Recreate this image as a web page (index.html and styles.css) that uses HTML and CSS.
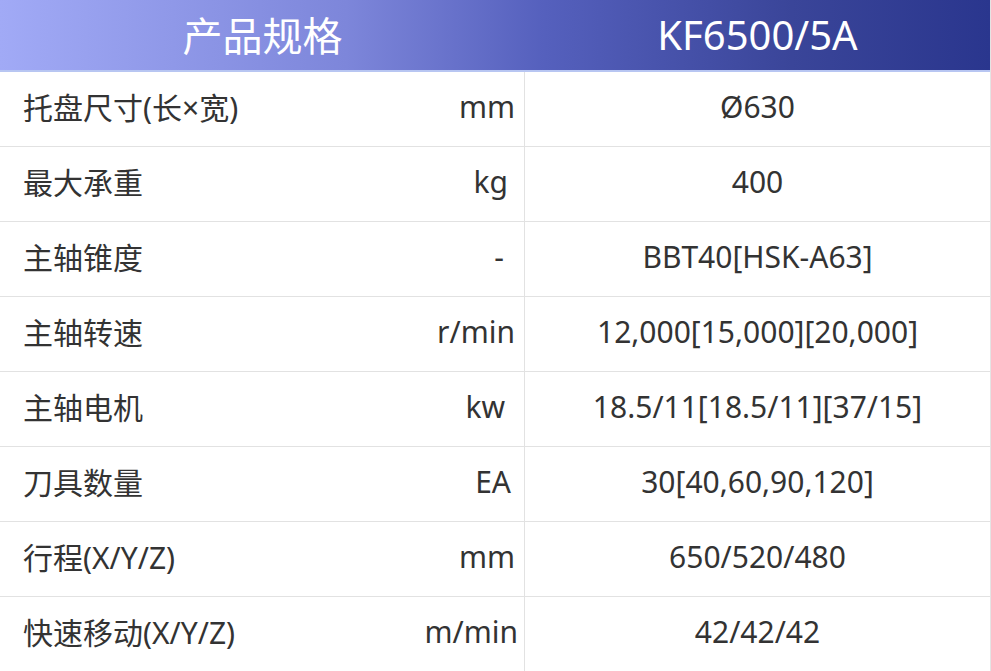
FILE: index.html
```html
<!DOCTYPE html>
<html lang="zh">
<head>
<meta charset="utf-8">
<link rel="stylesheet" href="styles.css">
</head>
<body>
<div class="spec">
  <div class="head">
    <div class="hcell">产品规格</div>
    <div class="hcell">KF6500/5A</div>
  </div>
  <div class="row"><div class="name">托盘尺寸(长×宽)</div><div class="unit">mm</div><div class="val">Ø630</div></div>
  <div class="row"><div class="name">最大承重</div><div class="unit u-kg">kg</div><div class="val">400</div></div>
  <div class="row"><div class="name">主轴锥度</div><div class="unit u-dash">-</div><div class="val">BBT40[HSK-A63]</div></div>
  <div class="row"><div class="name">主轴转速</div><div class="unit">r/min</div><div class="val">12,000[15,000][20,000]</div></div>
  <div class="row"><div class="name">主轴电机</div><div class="unit u-kw">kw</div><div class="val">18.5/11[18.5/11][37/15]</div></div>
  <div class="row"><div class="name">刀具数量</div><div class="unit u-ea">EA</div><div class="val">30[40,60,90,120]</div></div>
  <div class="row"><div class="name">行程(X/Y/Z)</div><div class="unit">mm</div><div class="val">650/520/480</div></div>
  <div class="row"><div class="name">快速移动(X/Y/Z)</div><div class="unit u-mmin">m/min</div><div class="val">42/42/42</div></div>
</div>
</body>
</html>
```
FILE: styles.css
```css
html, body {
  margin: 0;
  padding: 0;
  background: #fff;
}
body {
  font-family: "Noto Sans", "Noto Sans CJK SC", sans-serif;
  color: #333;
}
.spec {
  width: 991px;
  border-right: 1px solid #e4e4e4;
  box-sizing: border-box;
}
.head {
  display: grid;
  grid-template-columns: 525px 1fr;
  height: 70px;
  background: linear-gradient(90deg, #a1aaf6 0%, #7d86da 35%, #5560bd 55%, #3a4599 80%, #2a368e 100%);
  border-bottom: 2px solid #b8c6f2;
}
.hcell {
  display: flex;
  align-items: center;
  justify-content: center;
  color: #fff;
  font-size: 40px;
  padding-bottom: 2px;
}
.row {
  display: grid;
  grid-template-columns: 420px 105px 1fr;
  height: 74px;
  border-bottom: 1px solid #e2e2e2;
  font-size: 30px;
}
.row:last-child {
  border-bottom: none;
}
.name, .unit, .val {
  padding-bottom: 6px;
}
.name {
  display: flex;
  align-items: center;
  padding-left: 23px;
}
.unit {
  display: flex;
  align-items: center;
  justify-content: flex-end;
  padding-right: 9px;
  border-right: 1px solid #e2e2e2;
}
.u-kg { padding-right: 16px; }
.u-dash { padding-right: 20px; }
.u-kw { padding-right: 19px; }
.u-ea { padding-right: 13px; }
.u-mmin { padding-right: 6px; }
.val {
  display: flex;
  align-items: center;
  justify-content: center;
}
```
